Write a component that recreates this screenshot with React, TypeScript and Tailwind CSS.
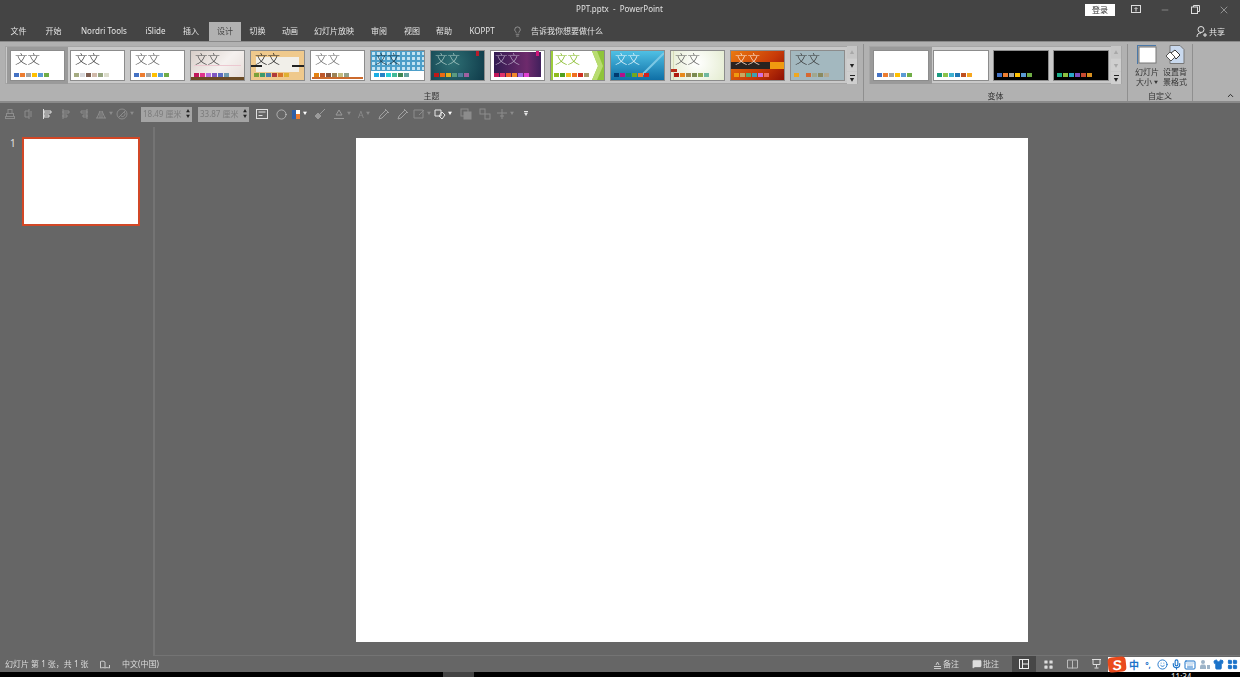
import React from "react";
import { Lightbulb, Minus, X, Smile, Mic, Keyboard, Shirt, LayoutGrid, ChevronUp, MessageSquare, Circle } from "lucide-react";

const office = ["bg-[#4472c4]", "bg-[#ed7d31]", "bg-[#a5a5a5]", "bg-[#ffc000]", "bg-[#5b9bd5]", "bg-[#70ad47]"];

type Theme = { bg: string; text: string; sw: string[]; decor?: React.ReactNode; title?: string };

const Tag = ({ c }: { c: string }) => <div className="absolute top-0 right-[5px] w-[3px] h-[5px]"><div className={`w-full h-full ${c}`} /></div>;

const themes: Theme[] = [
  { bg: "bg-white", text: "text-[#444]", sw: office },
  { bg: "bg-white", text: "text-[#333]", sw: ["bg-[#a5ab81]", "bg-[#d8d9dc]", "bg-[#7e5f52]", "bg-[#d0b9a9]", "bg-[#96a57f]", "bg-[#dcdccc]"] },
  { bg: "bg-white", text: "text-[#555]", sw: office },
  {
    bg: "bg-[linear-gradient(135deg,#d8cec8,#f5f1ef_55%,#e6dcd8)]", text: "text-[#444]",
    sw: ["bg-[#c2185b]", "bg-[#e0338c]", "bg-[#b66fe0]", "bg-[#7e57c2]", "bg-[#5c6bc0]", "bg-[#6d9ab0]"],
    decor: <>
      <div className="absolute left-[3px] right-[3px] top-[14px] h-px bg-[#ecc8d0]" />
      <div className="absolute left-0 right-0 bottom-0 h-[3px] bg-[#6b4a24]" />
    </>,
  },
  {
    bg: "bg-[#efc98c]", text: "text-[#111]",
    sw: ["bg-[#7ca13a]", "bg-[#3d9a6a]", "bg-[#4a7fb0]", "bg-[#b03a3a]", "bg-[#d9772a]", "bg-[#e0b030]"],
    decor: <>
      <div className="absolute left-[5px] right-[5px] top-[6px] h-[15px] bg-[#f1efe9]" />
      <div className="absolute left-0 right-0 top-[14px] h-[2px] bg-[#222]" />
      <div className="absolute left-[11px] right-[12px] top-[14px] h-[2px] bg-[#f1efe9]" />
    </>,
  },
  {
    bg: "bg-white", text: "text-[#666]",
    sw: ["bg-[#e48312]", "bg-[#bd582c]", "bg-[#865640]", "bg-[#9b8357]", "bg-[#c2bc80]", "bg-[#94a088]"],
    decor: <div className="absolute left-px right-px bottom-px h-[2px] bg-[#cc6a2c]" />,
  },
  {
    bg: "bg-white", text: "text-[#17303e]",
    sw: ["bg-[#1cade4]", "bg-[#2683c6]", "bg-[#27ced7]", "bg-[#42ba97]", "bg-[#3e8853]", "bg-[#62a39f]"],
    decor: <div className="absolute left-0 right-0 top-0 h-[20px] bg-[#4d9fc9] bg-[radial-gradient(circle,#c4e4f2_1.4px,transparent_1.9px)] bg-[length:5px_5px]" />,
  },
  {
    bg: "bg-[radial-gradient(circle_at_40%_40%,#2e6f74,#0f3b4a)]", text: "text-[#a9c9c4]",
    sw: ["bg-[#c01818]", "bg-[#ea6a12]", "bg-[#e0b020]", "bg-[#5a9a80]", "bg-[#4f7f9f]", "bg-[#a060a0]"],
    decor: <Tag c="bg-[#b81c2c]" />,
  },
  {
    bg: "bg-white", text: "text-[#b9a9c6]",
    sw: ["bg-[#c2185b]", "bg-[#e0336b]", "bg-[#f0602b]", "bg-[#f08a2b]", "bg-[#a366e0]", "bg-[#e040d0]"],
    decor: <>
      <div className="absolute left-[3px] right-[3px] top-[1px] bottom-[3px] bg-[linear-gradient(90deg,#321c52,#6e2a6c_70%,#40205c)]" />
      <Tag c="bg-[#d0157a]" />
    </>,
  },
  {
    bg: "bg-white", text: "text-[#7cb518]",
    sw: ["bg-[#8fbc1e]", "bg-[#4fa020]", "bg-[#f0c020]", "bg-[#f07020]", "bg-[#d03020]", "bg-[#a89868]"],
    decor: <>
      <div className="absolute left-0 top-0 bottom-0 w-[2px] bg-[#9ccc3c]" />
      <svg className="absolute right-0 top-0" width="12" height="29" viewBox="0 0 12 29"><path d="M0 0H12V29H0L6 15Z" fill="#8fc43a" /><path d="M5 0L11 15L5 29H0L6 15L0 0Z" fill="#b8dc70" /></svg>
    </>,
  },
  {
    bg: "bg-[linear-gradient(180deg,#4fc0e4,#0f6fa6)]", text: "text-[#e6f6fc]",
    sw: ["bg-[#003a70]", "bg-[#b0108a]", "bg-[#108a70]", "bg-[#70a820]", "bg-[#f07a30]", "bg-[#d02020]"],
    decor: <svg className="absolute right-0 top-0" width="26" height="29" viewBox="0 0 26 29"><path d="M26 2L4 24" stroke="#7cc8e4" strokeWidth="2" /></svg>,
  },
  {
    bg: "bg-[radial-gradient(circle_at_50%_40%,#ffffff,#e4ecd0)]", text: "text-[#555]",
    sw: ["bg-[#b01c10]", "bg-[#e8891a]", "bg-[#a08a50]", "bg-[#7a8a50]", "bg-[#90a850]", "bg-[#70b8a0]"],
    decor: <>
      <div className="absolute left-[2px] top-0 bottom-0 w-px bg-[#d8dcb8]" />
      <div className="absolute left-0 top-[18px] w-[6px] h-[3px] bg-[#b8301a]" />
    </>,
  },
  {
    bg: "bg-[linear-gradient(135deg,#ea7a10,#c83a08_60%,#8e1004)]", text: "text-[#fbe5d4]",
    sw: ["bg-[#f09a10]", "bg-[#c9a860]", "bg-[#50b070]", "bg-[#40a0b0]", "bg-[#d070e0]", "bg-[#f07060]"],
    decor: <>
      <div className="absolute left-0 w-[39px] top-[11px] h-[7px] bg-[#2a2320]" />
      <div className="absolute right-0 w-[14px] top-[11px] h-[7px] bg-[#f09a10]" />
    </>,
  },
  {
    bg: "bg-[#a3b8bf]", text: "text-[#333]",
    sw: ["bg-[#f0a820]", "bg-[#a3b8bf]", "bg-[#d86830]", "bg-[#a0a890]", "bg-[#8a8a60]", "bg-[#b0a890]"],
  },
];

const variants: Theme[] = [
  { bg: "bg-white", text: "text-white", sw: office, title: "" },
  { bg: "bg-white", text: "text-white", sw: ["bg-[#1a9a80]", "bg-[#8bc34a]", "bg-[#3fb1d1]", "bg-[#1f77b4]", "bg-[#c0501f]", "bg-[#f4a622]"], title: "" },
  { bg: "bg-black", text: "text-white", sw: office, title: "" },
  { bg: "bg-black", text: "text-white", sw: ["bg-[#1cae8a]", "bg-[#8bbf40]", "bg-[#2aa8c8]", "bg-[#7a50c0]", "bg-[#c84a30]", "bg-[#d89020]"], title: "" },
];

function Card({ t, selected, wide }: { t: Theme; selected?: boolean; wide?: boolean }) {
  return (
    <div className={`shrink-0 ${selected ? "bg-[#9a9a9a] p-[3px] -m-[3px] relative" : ""}`}>
      <div className={`relative h-[31px] ${wide ? "w-[55.5px]" : "w-[55px]"} border border-[#8c8c8c] overflow-hidden ${t.bg}`}>
        {t.decor}
        {t.title !== "" && (
          <div className={`absolute left-[4px] top-[1px] text-[12.5px] leading-[16px] font-light ${t.text}`}>文文</div>
        )}
        <div className="absolute left-[3px] bottom-[3px] flex gap-[1px]">
          {t.sw.map((c, i) => <div key={i} className={`w-[5px] h-[4px] ${c}`} />)}
        </div>
      </div>
    </div>
  );
}

function GalleryScroll({ disabledDown }: { disabledDown?: boolean }) {
  return (
    <div className="w-[10px] flex flex-col gap-px text-[4.5px] leading-none">
      <div className="h-[12px] bg-[#c6c6c6] flex items-center justify-center text-[#a8a8a8]">▲</div>
      <div className={`h-[12px] bg-[#cfcfcf] flex items-center justify-center ${disabledDown ? "text-[#a8a8a8]" : "text-[#222]"}`}>▼</div>
      <div className="h-[12px] bg-[#cfcfcf] flex flex-col items-center justify-center text-[#222]">
        <div className="w-[5px] h-px bg-[#222] mb-px" />▼
      </div>
    </div>
  );
}

const Tab = ({ label, active, cls }: { label: string; active?: boolean; cls?: string }) => (
  <div className={`h-[19px] flex items-center justify-center px-2 pb-[1px] whitespace-nowrap ${active ? "bg-[#b1b1b1] text-[#444]" : "text-[#e4e4e4]"} ${cls ?? ""}`}>{label}</div>
);

const S = ({ children, w = 12 }: { children: React.ReactNode; w?: number }) => (
  <svg width={w} height="12" viewBox={`0 0 ${w} 12`} fill="none" stroke="currentColor" strokeWidth="1">{children}</svg>
);

const Caret = ({ cls = "text-[#8c8c8c]" }: { cls?: string }) => <span className={`text-[4px] leading-none ml-[2px] ${cls}`}>▼</span>;

function SizeInput({ v }: { v: string }) {
  return (
    <div className="w-[51px] h-[15px] bg-[#a4a4a4] flex items-center pl-[2px] text-[8px] text-[#7c7c7c]">
      <span className="flex-1 whitespace-nowrap">{v} 厘米</span>
      <span className="w-[8px] flex flex-col items-center text-[4px] leading-[5px] text-[#222]"><span>▲</span><span>▼</span></span>
    </div>
  );
}

function Toolbar() {
  const dim = "text-[#8c8c8c]";
  return (
    <div className="h-[22px] flex items-center pl-[1px] shrink-0 blur-[0.3px]">
      <div className={`w-[18px] flex justify-center ${dim}`}><S><rect x="4" y="1.5" width="4" height="4" /><rect x="2.5" y="5.5" width="7" height="3" /><rect x="1.5" y="8.5" width="9" height="2" /></S></div>
      <div className={`w-[18px] flex justify-center ${dim}`}><S><path d="M7 1v10M9 3v6M7 3H3v6h4" /></S></div>
      <div className="w-[20px] flex justify-center text-[#e0e0e0]"><S><path d="M2.5 1v10M3 3h7v2H3zM3 7h5v2H3z" /></S></div>
      <div className={`w-[18px] flex justify-center ${dim}`}><S><path d="M3 1v10M3 3h6v2H3zM3 7h4v2H3z" /></S></div>
      <div className={`w-[18px] flex justify-center ${dim}`}><S><path d="M9 1v10M3 3h6v2H3zM5 7h4v2H5z" /></S></div>
      <div className={`w-[22px] flex items-center justify-center ${dim}`}><S><path d="M1 10h10M2 10l3-7v7M7 10V3l3 7" /></S><Caret /></div>
      <div className={`w-[20px] flex items-center justify-center ${dim}`}><S><circle cx="6" cy="6" r="5" /><path d="M2.5 9.5l7-7M5 8a2.5 2.5 0 1 0 3-4" /></S><Caret /></div>
      <div className="ml-[6px]"><SizeInput v="18.49" /></div>
      <div className="ml-[6px]"><SizeInput v="33.87" /></div>
      <div className="w-[24px] ml-[1px] flex justify-center text-[#e0e0e0]"><S><rect x="0.5" y="1.5" width="11" height="9" /><path d="M2.5 4h7M2.5 7.500h4" /></S></div>
      <div className="w-[14px] flex justify-center text-[#e8e8e8]"><Circle size={11} strokeWidth={1.2} /></div>
      <div className="w-[22px] flex items-center justify-center">
        <div className="w-[10px] h-[11px] grid grid-cols-2 grid-rows-2 border border-[#666]">
          <div className="bg-[#2f5fa8]" /><div className="bg-white" /><div className="bg-[#2f5fa8]" /><div className="bg-[#ed7d31]" />
        </div>
        <Caret cls="text-white" />
      </div>
      <div className="w-[20px] flex justify-center text-[#9a9a9a]"><S><path d="M11 1L6 6M1 8l3-3 3 3-3 3z" fill="currentColor" /></S></div>
      <div className="w-[24px] flex items-center justify-center text-[#9a9a9a]"><S><path d="M3 7l3-5 3 5zM1 10.500h10" /></S><Caret /></div>
      <div className={`w-[20px] flex items-center justify-center text-[9px] ${dim}`}>A<Caret /></div>
      <div className="w-[19px] flex justify-center text-[#a0a0a0]"><S><path d="M1 11l1-3 6-6 2 2-6 6zM7 1l4 4" /></S></div>
      <div className="w-[19px] flex justify-center text-[#a0a0a0]"><S><path d="M1 11l1-3 6-6 2 2-6 6zM7 1l4 4" /></S></div>
      <div className={`w-[20px] flex items-center justify-center ${dim}`}><S><path d="M1 2h9v8H1zM6 7l5-5" /></S><Caret /></div>
      <div className="w-[22px] flex items-center justify-center text-[#e8e8e8]"><S><path d="M1 2h6v6H1zM8 4l3 3-3 4-3-3z" /></S><Caret cls="text-white" /></div>
      <div className={`w-[19px] ml-[2px] flex justify-center ${dim}`}><S><rect x="1" y="1" width="7" height="7" /><rect x="4" y="4" width="7" height="7" fill="currentColor" /></S></div>
      <div className={`w-[19px] flex justify-center ${dim}`}><S><rect x="1" y="1" width="5" height="5" /><rect x="6" y="6" width="5" height="5" /></S></div>
      <div className={`w-[22px] flex items-center justify-center ${dim}`}><S><path d="M1 5h10M4 8h4M6 1v10" /></S><Caret /></div>
      <div className="w-[20px] flex flex-col items-center text-[#e8e8e8]"><div className="w-[4px] h-px bg-current mb-[1px]" /><span className="text-[4px] leading-none">▼</span></div>
    </div>
  );
}

export default function App() {
  return (
    <div className="w-[1240px] h-[677px] overflow-hidden flex flex-col bg-[#666] font-['Noto_Sans','Noto_Sans_CJK_SC',sans-serif] text-[8px] leading-none">
      {/* title bar */}
      <div className="h-[22px] bg-[#444] flex items-center relative shrink-0 text-[#e0e0e0] blur-[0.3px]">
        <div className="w-[1085px] text-center pl-[154px] mt-[-4px] text-[8px] whitespace-pre">PPT.pptx  -  PowerPoint</div>
        <div className="w-[30px] h-[12px] mt-[-3px] bg-white text-[#333] flex items-center justify-center">登录</div>
        <div className="flex items-center mt-[-3px] ml-[10px] text-[#ddd]">
          <div className="w-[22px] flex justify-center"><svg width="10" height="9" viewBox="0 0 10 9" fill="none" stroke="currentColor"><rect x=".5" y=".5" width="9" height="7" /><path d="M5 6.500V3M3.500 4L5 2.500 6.500 4" /></svg></div>
          <div className="w-[30px] ml-[3px] flex justify-center"><Minus size={10} strokeWidth={1} /></div>
          <div className="w-[30px] flex justify-center"><svg width="9" height="9" viewBox="0 0 9 9" fill="none" stroke="currentColor"><rect x=".5" y="2" width="6" height="6.500" /><path d="M2.500 2V.5h6V6.500H7" /></svg></div>
          <div className="w-[28px] flex justify-center"><X size={12} strokeWidth={1} /></div>
        </div>
      </div>
      {/* tabs */}
      <div className="h-[19px] bg-[#444] flex items-center shrink-0 blur-[0.3px]">
        <Tab label="文件" cls="ml-[2.5px] mr-[3px]" />
        <Tab label="开始" cls="mr-[3.5px]" />
        <Tab label="Nordri Tools" cls="mr-[2.5px]" />
        <Tab label="iSlide" cls="mr-[1.5px]" />
        <Tab label="插入" cls="mr-[2px]" />
        <Tab label="设计" active cls="mr-[0.5px]" />
        <Tab label="切换" cls="mr-[0.5px]" />
        <Tab label="动画" />
        <Tab label="幻灯片放映" cls="mr-[1px]" />
        <Tab label="审阅" cls="mr-[1px]" />
        <Tab label="视图" />
        <Tab label="帮助" cls="mr-[1.5px]" />
        <Tab label="KOPPT" />
        <div className="ml-[9px] text-[#e4e4e4]"><Lightbulb size={11} strokeWidth={1} /></div>
        <div className="ml-[8.5px] pb-[1px] text-[#e4e4e4] whitespace-nowrap">告诉我你想要做什么</div>
        <div className="ml-auto mr-[15px] flex items-center gap-[2px] text-[#e4e4e4]">
          <svg width="11" height="11" viewBox="0 0 11 11" fill="none" stroke="currentColor"><circle cx="5" cy="3.500" r="3" /><path d="M1 11c0-3 1.500-4 4-4M7 9h4M9 7v4" /></svg>
          <span>共享</span>
        </div>
      </div>
      {/* ribbon */}
      <div className="h-[62px] bg-[#b1b1b1] border-t border-[#8a8a8a] border-b-2 border-b-[#8a8a8a] flex shrink-0 text-[#333] relative blur-[0.3px]">
        <div className="w-[864px] border-r border-[#8f8f8f] mt-[2px] flex flex-col">
          <div className="ml-[5px] mt-[2px] w-[853px] h-[38px] bg-[#c9c9c9] border border-[#a6a6a6] flex items-center pl-[4px]">
            <div className="flex gap-[5px] flex-1">
              {themes.map((t, i) => <Card key={i} t={t} selected={i === 0} />)}
            </div>
            <GalleryScroll />
          </div>
          <div className="flex-1 flex items-center justify-center pt-[7px]">主题</div>
        </div>
        <div className="w-[264px] border-r border-[#8f8f8f] mt-[2px] flex flex-col">
          <div className="ml-[5px] mt-[2px] w-[253px] h-[38px] bg-[#c9c9c9] border border-[#a6a6a6] flex items-center pl-[3px]">
            <div className="flex gap-[4.500px] flex-1">
              {variants.map((t, i) => <Card key={i} t={t} selected={i === 0} wide />)}
            </div>
            <GalleryScroll disabledDown />
          </div>
          <div className="flex-1 flex items-center justify-center pt-[7px]">变体</div>
        </div>
        <div className="w-[65px] border-r border-[#8f8f8f] mt-[2px] flex flex-col items-center">
          <div className="flex gap-[6px] pt-[1px] pl-[2px]">
            <div className="flex flex-col items-center w-[22px]">
              <svg width="20" height="19" viewBox="0 0 20 19" fill="none"><path d="M.5 0v19M1 .5h18" stroke="#4a78a8" /><rect x="2" y="2" width="17" height="16" fill="#fff" stroke="#777" /></svg>
              <div className="mt-[3px] whitespace-nowrap leading-[10px]">幻灯片</div>
              <div className="whitespace-nowrap leading-[10px]">大小 <span className="text-[4px] align-middle">▼</span></div>
            </div>
            <div className="flex flex-col items-center w-[22px]">
              <svg width="20" height="19" viewBox="0 0 20 19"><path d="M5 .5h10l4 4V18.500H5z" fill="#c9d9ee" stroke="#777" /><path d="M6 8l4-3 5 5-4 4z" fill="#fff" stroke="#333" /><path d="M1 11l4-4 5 5-4 4z" fill="#fff" stroke="#555" /></svg>
              <div className="mt-[3px] whitespace-nowrap leading-[10px]">设置背</div>
              <div className="whitespace-nowrap leading-[10px]">景格式</div>
            </div>
          </div>
          <div className="mt-auto h-[11px] flex items-center">自定义</div>
        </div>
        <div className="flex-1 flex items-end justify-end pr-[5px] pb-[1px] text-[#222]"><ChevronUp size={9} strokeWidth={2.5} /></div>
      </div>
      {/* workspace */}
      <div className="flex-1 flex flex-col min-h-0 text-[#888]">
        <Toolbar />
        <div className="flex-1 flex min-h-0 pt-[2px]">
          <div className="w-[155px] shrink-0 border-r-2 border-[#747474] flex items-start pt-[10px] pl-[10px]">
            <div className="text-[10px] text-[#e0e0e0] w-[12px] pt-[1px]">1</div>
            <div className="w-[118px] h-[89px] bg-white border-2 border-[#d24726]" />
          </div>
          <div className="flex-1 flex flex-col border-b border-[#747474]">
            <div className="ml-[201px] mt-[11px] w-[672px] h-[504px] bg-white" />
          </div>
        </div>
      </div>
      {/* status bar */}
      <div className="h-[16px] bg-[#666] flex items-center shrink-0 text-[#dcdcdc] text-[8px]">
        <span className="ml-[5px] w-[95px] whitespace-nowrap blur-[0.3px]">幻灯片 第 1 张，共 1 张</span>
        <span className="w-[22px]">
          <svg width="10" height="9" viewBox="0 0 10 9" fill="none" stroke="#ccc"><path d="M5 2v6M5 2C4 1 2 1 .5 1.500V8C2 7.500 4 7.500 5 8c1-.5 3-.5 4.500 0V5" /></svg>
        </span>
        <span className="w-[811px] whitespace-nowrap blur-[0.3px]">中文(中国)</span>
        <span className="flex items-center gap-[1px] w-[39px] blur-[0.3px]">
          <svg width="9" height="9" viewBox="0 0 9 9" fill="none" stroke="#ccc"><path d="M3 5l1.500-3L6 5M1 6.500h7M1 8.500h7" /></svg>
          <span>备注</span>
        </span>
        <span className="flex items-center gap-[1px] w-[40px] blur-[0.3px]">
          <MessageSquare size={10} fill="#ddd" strokeWidth={1} />
          <span>批注</span>
        </span>
        <div className="w-[24px] h-[16px] bg-[#474747] flex items-center justify-center">
          <svg width="10" height="10" viewBox="0 0 10 10" fill="none" stroke="#eee"><rect x=".5" y=".5" width="9" height="9" /><path d="M3.500 .5v9M3.500 5h6" /></svg>
        </div>
        <div className="w-[24px] flex justify-center"><LayoutGrid size={11} fill="#ddd" strokeWidth={0} className="text-[#ddd]" /></div>
        <div className="w-[24px] flex justify-center">
          <svg width="11" height="10" viewBox="0 0 11 10" fill="none" stroke="#bbb"><path d="M5.500 1.500v8M.5 1h10v8H.5z" /></svg>
        </div>
        <div className="w-[24px] flex justify-center">
          <svg width="11" height="10" viewBox="0 0 11 10" fill="none" stroke="#ddd"><path d="M1 .5h9M2 .5v5h7v-5M5.500 5.500v3M3.500 9h4" /></svg>
        </div>
        <div className="flex-1 h-[15px] mt-[1px] bg-white flex items-center text-[#1b73c9]">
          <div className="w-[18px] h-[15px] bg-[#ea4a1c] rounded-[4px] -rotate-6 text-white font-bold italic text-[14px] flex items-center justify-center font-['Liberation_Sans',sans-serif]">S</div>
          <div className="ml-[1px] w-[14px] flex justify-center font-bold text-[10px]">中</div>
          <div className="w-[14px] flex justify-center font-bold text-[8px]">°,</div>
          <div className="w-[14px] flex justify-center"><Smile size={11} /></div>
          <div className="w-[14px] flex justify-center"><Mic size={11} strokeWidth={2.5} /></div>
          <div className="w-[14px] flex justify-center"><Keyboard size={12} /></div>
          <div className="w-[14px] flex justify-center">
            <svg width="11" height="11" viewBox="0 0 11 11" fill="#9db4c8"><circle cx="4" cy="3" r="2" /><path d="M1 10V8c0-2 1-2.500 3-2.500S7 6 7 8v2zM8 6h3v4H8z" /></svg>
          </div>
          <div className="w-[14px] flex justify-center"><Shirt size={11} fill="currentColor" /></div>
          <div className="w-[14px] flex justify-center"><LayoutGrid size={11} fill="currentColor" /></div>
        </div>
      </div>
      {/* taskbar sliver */}
      <div className="h-[5px] bg-black flex shrink-0 overflow-hidden text-[#eee]">
        <div className="ml-[443px] w-[31px] bg-[#444]" />
        <div className="ml-[697px] text-[8px] leading-[8px] mt-[1px]">11:34</div>
      </div>
    </div>
  );
}
